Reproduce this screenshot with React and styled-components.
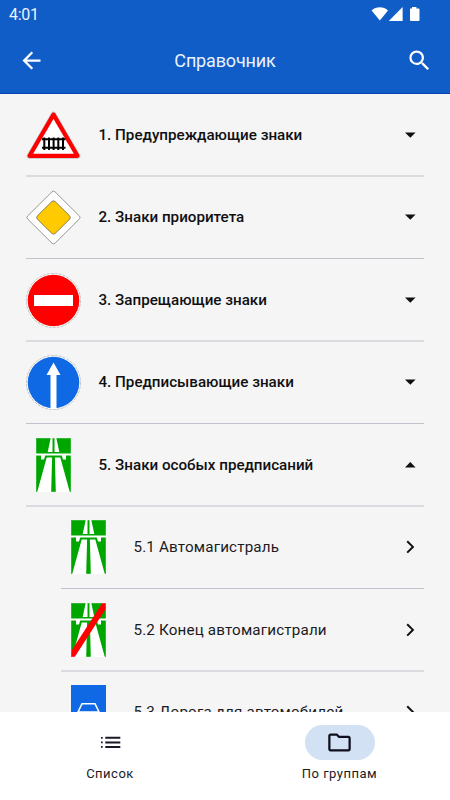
import { useState } from "react";
import styled, { createGlobalStyle } from "styled-components";

const GlobalStyle = createGlobalStyle`
  * {
    box-sizing: border-box;
  }

  body {
    margin: 0;
    font-family: Roboto, "Noto Sans", sans-serif;
    background: #f5f5f5;
  }
`;

const Screen = styled.div`
  display: flex;
  flex-direction: column;
  width: 450px;
  height: 800px;
  overflow: hidden;
  background: #f5f5f5;
`;

const Header = styled.header`
  flex: none;
  height: 94px;
  color: #fff;
  background: #105dc7;
  border-bottom: 1px solid #0a41b0;
`;

const StatusBar = styled.div`
  display: flex;
  align-items: center;
  justify-content: space-between;
  height: 27px;
  padding: 1px 30px 0 9px;
  font-size: 16px;
  letter-spacing: -0.3px;
  color: #eaf2fd;

  svg {
    display: block;
    margin-top: -1px;
  }
`;

const AppBar = styled.div`
  display: grid;
  grid-template-columns: 62px 1fr 62px;
  align-items: center;
  height: 66px;

  h1 {
    margin: 0;
    text-align: center;
    font-size: 18px;
    font-weight: 400;
    letter-spacing: -0.15px;
    color: #eaf2fd;
  }
`;

const IconButton = styled.button`
  display: flex;
  align-items: center;
  justify-content: center;
  padding: 0;
  border: none;
  background: none;
  color: inherit;
  cursor: pointer;
`;

const List = styled.main`
  flex: 1;
  min-height: 0;
  overflow: hidden;
  padding: 0 26px;
`;

const Row = styled.div`
  display: flex;
  align-items: center;
  height: 82.5px;
  margin-left: ${(p) => (p.$nested ? "35px" : "0")};
  padding: ${(p) => (p.$thin ? "0" : "2px")} 4px 0 0;
  border-bottom: ${(p) => (p.$thin ? "1px solid #c2c2cc" : "2px solid #dadae0")};
  cursor: pointer;
`;

const SignBox = styled.div`
  flex: none;
  width: 55px;
  height: 55px;
  display: flex;
  align-items: center;
  justify-content: center;

  svg {
    display: block;
  }
`;

const Title = styled.span`
  flex: 1;
  margin-left: 17.5px;
  white-space: nowrap;
  font-size: 15.2px;
  font-weight: ${(p) => (p.$nested ? 400 : 500)};
  letter-spacing: ${(p) => (p.$nested ? "0.16px" : "-0.01px")};
  color: ${(p) => (p.$nested ? "#1b1b1f" : "#101012")};
`;

const BottomNav = styled.nav`
  flex: none;
  display: flex;
  height: 88px;
  padding-top: 13px;
  background: #fff;
`;

const NavItem = styled.button`
  flex: 1;
  display: flex;
  flex-direction: column;
  align-items: center;
  gap: 6px;
  padding: 0;
  border: none;
  background: none;
  font-family: inherit;
  font-size: 13px;
  letter-spacing: 0.5px;
  color: #1b1b1f;
  cursor: pointer;

  &:first-child {
    flex: none;
    width: 220px;
  }

  &:last-child {
    padding-left: 9px;
  }
`;

const Pill = styled.span`
  display: flex;
  align-items: center;
  justify-content: center;
  width: 70px;
  height: 35px;
  border-radius: 18px;
  background: ${(p) => (p.$active ? "#d2e1f4" : "transparent")};
`;

const StatusIcons = () => (
  <svg width="49" height="16" viewBox="0 0 49 16" fill="#fff">
    <path d="M0.6 4.6C5 0.2 12.6 0.2 17 4.6L8.8 14.4Z" />
    <path d="M31.6 1V15H17.8Z" />
    <path d="M39 2.4h2V1h4.4v1.4h2.1q1 0 1 1V14q0 1-1 1H40q-1 0-1-1Z" />
  </svg>
);

const BackIcon = () => (
  <svg width="27" height="27" viewBox="0 0 24 24" fill="currentColor">
    <path d="M20 11H7.83l5.59-5.59L12 4l-8 8 8 8 1.41-1.41L7.83 13H20v-2z" />
  </svg>
);

const SearchIcon = () => (
  <svg width="27" height="27" viewBox="0 0 24 24" fill="currentColor">
    <path d="M15.5 14h-.79l-.28-.27A6.471 6.471 0 0 0 16 9.5 6.5 6.5 0 1 0 9.5 16c1.61 0 3.09-.59 4.23-1.57l.27.28v.79l5 4.99L20.49 19l-4.99-5zm-6 0C7.01 14 5 11.99 5 9.5S7.01 5 9.5 5 14 7.01 14 9.5 11.99 14 9.5 14z" />
  </svg>
);

const Caret = ({ open }) => (
  <svg width="20" height="20" viewBox="0 0 20 20" fill="#101012">
    <path d={open ? "M5 12.4 10.3 7.1 15.6 12.4Z" : "M5 7.4 10.3 12.7 15.6 7.4Z"} />
  </svg>
);

const Chevron = () => (
  <svg width="20" height="20" viewBox="0 0 20 20" fill="none" stroke="#101012" strokeWidth="2">
    <path d="M7.2 4.2 12.9 9.9 7.2 15.6" />
  </svg>
);

const ListIcon = () => (
  <svg width="27" height="27" viewBox="0 0 27 27" fill="#1b1526">
    <path d="M4 8h1.7v1.7H4zM4 12.5h1.7v1.7H4zM4 17h1.7v1.7H4zM8.3 7.8h15v2h-15zM8.3 12.4h15v2h-15zM8.3 17h15v2h-15z" />
  </svg>
);

const FolderIcon = () => (
  <svg width="27" height="27" viewBox="0 0 24 24" fill="#0e0e1c">
    <path d="M9.17 6l2 2H20v10H4V6h5.17M10 4H4c-1.1 0-1.99.9-1.99 2L2 18c0 1.1.9 2 2 2h16c1.1 0 2-.9 2-2V8c0-1.1-.9-2-2-2h-8l-2-2z" />
  </svg>
);

const WarningSign = () => (
  <svg width="55" height="55" viewBox="0 0 55 55">
    <path d="M27.5 6 51.9 48.2H3.1Z" fill="#fff" stroke="#c4c4c4" strokeWidth="5" strokeLinejoin="round" />
    <path d="M27.5 6.6 51.4 47.8H3.6Z" fill="#fff" stroke="#fe0000" strokeWidth="4.2" strokeLinejoin="round" />
    <path
      d="M16 31.2H39.5M16 39.8H39.5M18.3 29.5V42M23 29.5V42M27.6 29.5V42M32.3 29.5V42M37 29.5V42"
      stroke="#000"
      strokeWidth="2"
      fill="none"
    />
  </svg>
);

const PrioritySign = () => (
  <svg width="55" height="55" viewBox="0 0 55 55" strokeLinejoin="round">
    <path
      d="M26 1.8Q27.5 .3 29 1.8L53.4 26Q54.8 27.5 53.4 29L29 53.2Q27.5 54.7 26 53.2L1.6 29Q.2 27.5 1.6 26Z"
      fill="#fff"
      stroke="#8c8c8c"
      strokeWidth=".9"
    />
    <path
      d="M25.8 11.6Q27.5 10 29.2 11.6L43.6 25.8Q45.2 27.5 43.6 29.2L29.2 43.4Q27.5 45 25.8 43.4L11.4 29.2Q9.8 27.5 11.4 25.8Z"
      fill="#ffcb00"
      stroke="#6c6650"
      strokeWidth=".8"
    />
  </svg>
);

const NoEntrySign = () => (
  <svg width="55" height="55" viewBox="0 0 55 55">
    <circle cx="27.5" cy="27.5" r="27" fill="#fff" stroke="#aaa" strokeWidth=".7" strokeDasharray="3 1" />
    <circle cx="27.5" cy="27.5" r="25.8" fill="#fe0000" />
    <path d="M8 22H47V33H8Z" fill="#fff" />
  </svg>
);

const StraightSign = () => (
  <svg width="55" height="55" viewBox="0 0 55 55">
    <circle cx="27.5" cy="27.5" r="27" fill="#fff" stroke="#aaa" strokeWidth=".7" strokeDasharray="3 1" />
    <circle cx="27.5" cy="27.5" r="25.8" fill="#0f68e4" />
    <path d="M27.5 7.5 34.5 20H30.5V54H24.5V20H20.5Z" fill="#fff" />
  </svg>
);

const MotorwaySign = ({ end }) => (
  <svg width="35" height="54" viewBox="0 0 35 54">
    <path d="M0 0H35V54H0Z" fill="#00a600" />
    <path d="M14.7 0H16.5V14H11.7ZM18.5 0H20.3L23.3 14H18.5Z" fill="#fff" />
    <path d="M0 15.4H35V17.5H30V21.5H27L25.8 17.5H9.2L8 21.5H5V17.5H0Z" fill="#fff" />
    <path d="M10.7 19.4H16.1L15.2 54H1.2ZM18.9 19.4H24.3L33.8 54H19.8Z" fill="#fff" />
    {end && <path d="M31.3 0H35V5.5L3.7 54H0V48.5Z" fill="#fe0000" />}
    <path d="M.25.25H34.75V53.75H.25Z" fill="none" stroke="#fff" strokeWidth=".5" opacity=".5" />
  </svg>
);

const CarRoadSign = () => (
  <svg width="35" height="54" viewBox="0 0 35 54">
    <path d="M0 0H35V54H0Z" fill="#0f68e4" />
    <path d="M7 27 11 18.7H24L28 27V37H7ZM7 27H28" fill="none" stroke="#fff" strokeWidth="1.6" />
  </svg>
);

const groups = [
  { title: "1. Предупреждающие знаки", sign: <WarningSign /> },
  { title: "2. Знаки приоритета", sign: <PrioritySign /> },
  { title: "3. Запрещающие знаки", sign: <NoEntrySign /> },
  { title: "4. Предписывающие знаки", sign: <StraightSign /> },
  {
    title: "5. Знаки особых предписаний",
    sign: <MotorwaySign />,
    items: [
      { title: "5.1 Автомагистраль", sign: <MotorwaySign />, thin: true },
      { title: "5.2 Конец автомагистрали", sign: <MotorwaySign end /> },
      { title: "5.3 Дорога для автомобилей", sign: <CarRoadSign />, thin: true },
    ],
  },
];

const App = () => {
  const [opened, setOpened] = useState(4);

  return (
    <Screen>
      <GlobalStyle />
      <Header>
        <StatusBar>
          <span>4:01</span>
          <StatusIcons />
        </StatusBar>
        <AppBar>
          <IconButton aria-label="Назад">
            <BackIcon />
          </IconButton>
          <h1>Справочник</h1>
          <IconButton aria-label="Поиск">
            <SearchIcon />
          </IconButton>
        </AppBar>
      </Header>

      <List>
        {groups.map((group, index) => (
          <div key={group.title}>
            <Row
              $thin={index === 1 || index === 3}
              onClick={() => setOpened(opened === index ? null : index)}
            >
              <SignBox>{group.sign}</SignBox>
              <Title>{group.title}</Title>
              <Caret open={opened === index} />
            </Row>
            {opened === index &&
              group.items?.map((item) => (
                <Row key={item.title} $nested $thin={item.thin}>
                  <SignBox>{item.sign}</SignBox>
                  <Title $nested>{item.title}</Title>
                  <Chevron />
                </Row>
              ))}
          </div>
        ))}
      </List>

      <BottomNav>
        <NavItem>
          <Pill>
            <ListIcon />
          </Pill>
          Список
        </NavItem>
        <NavItem>
          <Pill $active>
            <FolderIcon />
          </Pill>
          По группам
        </NavItem>
      </BottomNav>
    </Screen>
  );
};

export default App;
